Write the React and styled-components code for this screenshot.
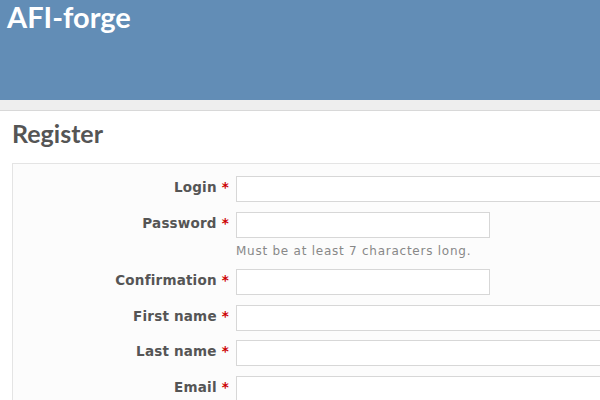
import React from 'react'
import styled, { createGlobalStyle } from 'styled-components'

const GlobalStyle = createGlobalStyle`
  html, body {
    margin: 0;
    padding: 0;
    background: #fff;
    overflow: hidden;
  }
  body {
    font-family: "DejaVu Sans", Verdana, sans-serif;
    font-size: 12px;
    color: #484848;
  }
`

const Header = styled.header`
  height: 100px;
  background: #628db6;
  padding: 0 7px;
  box-sizing: border-box;
`

const SiteTitle = styled.h1`
  margin: 0;
  font-family: Lato, "Liberation Sans", sans-serif;
  font-weight: bold;
  font-size: 29px;
  line-height: 1.2;
  color: #fff;
`

const MenuBar = styled.div`
  height: 10px;
  background: #eeeeee;
  border-bottom: 1px solid #d8d8d8;
`

const Content = styled.main`
  padding: 0 12px;
`

const PageTitle = styled.h2`
  margin: 8px 0 16px;
  font-family: Lato, "Liberation Sans", sans-serif;
  font-weight: bold;
  font-size: 25px;
  line-height: 28px;
  color: #555;
`

const Box = styled.div`
  width: 700px;
  background: #fcfcfc;
  border: 1px solid #e4e4e4;
  padding-top: 12px;
  display: grid;
  grid-template-columns: 216px auto;
  column-gap: 7px;
  row-gap: 9.5px;
  align-items: start;
`

const Label = styled.label`
  text-align: right;
  font-weight: bold;
  font-size: 13.5px;
  letter-spacing: 0.2px;
  line-height: 22px;
  color: #555;
  white-space: nowrap;
`

const Required = styled.span`
  color: #cc0000;
  margin-left: 5px;
`

const Field = styled.div`
  display: flex;
  flex-direction: column;
`

const Input = styled.input`
  box-sizing: border-box;
  height: 26px;
  width: ${({ $short }) => ($short ? '254px' : '460px')};
  border: 1px solid #d7d7d7;
  background: #fff;
  padding: 2px 4px;
  margin: 0;
  font: inherit;
`

const Hint = styled.em`
  font-style: normal;
  font-size: 12px;
  letter-spacing: 0.75px;
  line-height: 14px;
  color: #888;
  margin: 6px 0 2px;
`

const fields = [
  { label: 'Login' },
  { label: 'Password', short: true, hint: 'Must be at least 7 characters long.', type: 'password' },
  { label: 'Confirmation', short: true, type: 'password' },
  { label: 'First name' },
  { label: 'Last name' },
  { label: 'Email' },
]

export default function App() {
  return (
    <>
      <GlobalStyle />
      <Header>
        <SiteTitle>AFI-forge</SiteTitle>
      </Header>
      <MenuBar />
      <Content>
        <PageTitle>Register</PageTitle>
        <Box>
          {fields.map((f) => (
            <React.Fragment key={f.label}>
              <Label>
                {f.label}
                <Required>*</Required>
              </Label>
              <Field>
                <Input type={f.type || 'text'} $short={f.short} />
                {f.hint && <Hint>{f.hint}</Hint>}
              </Field>
            </React.Fragment>
          ))}
        </Box>
      </Content>
    </>
  )
}
